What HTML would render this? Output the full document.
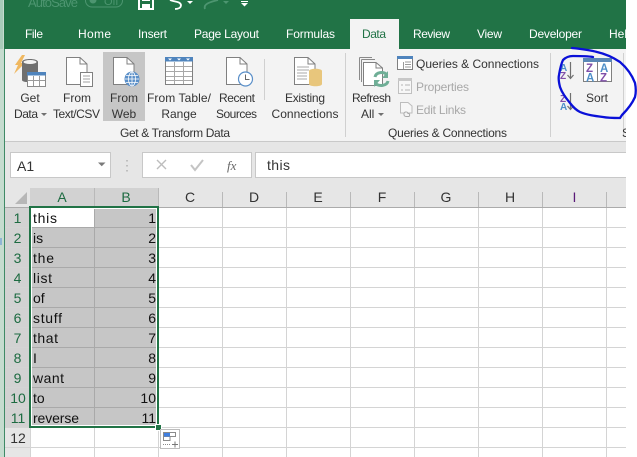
<!DOCTYPE html>
<html><head><meta charset="utf-8"><style>
html,body{margin:0;padding:0;background:#fff;width:637px;height:457px;overflow:hidden}
svg{display:block}
text{font-family:"Liberation Sans",sans-serif;font-size:12px;fill:#333}
.t{fill:#fff;font-size:12px}
.c{font-size:14px;fill:#111}
.n{font-size:14px;fill:#111;text-anchor:end}
.h{font-size:14px;fill:#333;text-anchor:middle}
.hs{font-size:14px;fill:#1d6b41;text-anchor:middle}
.m{text-anchor:middle}
.r{font-size:14px;fill:#1d6b41;text-anchor:middle}
</style></head><body>
<svg width="637" height="457" viewBox="0 0 637 457" xmlns="http://www.w3.org/2000/svg">
<rect width="637" height="457" fill="#fff"/>
<clipPath id="cp"><rect x="0" y="0" width="626" height="457"/></clipPath>
<g clip-path="url(#cp)">
<!-- title and tabs -->
<rect x="0" y="0" width="626" height="49" fill="#217346"/>
<text x="28" y="7" style="fill:#4d9570;font-size:13px" textLength="50">AutoSave</text>
<rect x="85.500" y="-6" width="37" height="13" rx="6.500" fill="none" stroke="#4d9570"/>
<circle cx="93" cy="0" r="3.500" fill="#4d9570"/>
<text x="104" y="5" style="fill:#4d9570;font-size:11px">Off</text>
<path d="M139 -3H153V9H139Z" fill="none" stroke="#fff" stroke-width="2"/><rect x="142" y="4" width="8" height="5" fill="#fff"/><rect x="142" y="-2" width="8" height="3" fill="#fff"/>
<path d="M170 0C174 2 180 1 181 5C181 8 178 9 175 9" fill="none" stroke="#fff" stroke-width="1.800"/>
<path d="M187 1h6l-3 3z" fill="#fff"/>
<path d="M205 9C203 4 210 2 218 0" fill="none" stroke="#4d9570" stroke-width="1.800"/>
<path d="M223 1h6l-3 3z" fill="#4d9570"/>
<rect x="241" y="1" width="7" height="1" fill="#fff"/><path d="M241 3h7l-3.500 3.500z" fill="#fff"/>
<rect x="350" y="19" width="49" height="31" fill="#f3f3f3"/>
<text class="t" x="25" y="38" textLength="18">File</text>
<text class="t" x="78" y="38" textLength="33">Home</text>
<text class="t" x="138" y="38" textLength="29">Insert</text>
<text class="t" x="194" y="38" textLength="65">Page Layout</text>
<text class="t" x="286" y="38" textLength="49">Formulas</text>
<text x="362" y="38" textLength="24" style="fill:#217346">Data</text>
<text class="t" x="413" y="38" textLength="37">Review</text>
<text class="t" x="477" y="38" textLength="25">View</text>
<text class="t" x="529" y="38" textLength="53">Developer</text>
<text class="t" x="609" y="38">Help</text>
<!-- ribbon -->
<rect x="0" y="49" width="626" height="92" fill="#f3f3f3"/>
<rect x="0" y="141" width="626" height="1" fill="#c9c9c9"/>
<rect x="0" y="142" width="626" height="46" fill="#e6e6e6"/>
<rect x="103" y="52" width="42" height="69" fill="#c6c6c6"/>
<rect x="264" y="59" width="1" height="41" fill="#d0d0d0"/>
<rect x="345" y="53" width="1" height="84" fill="#d0d0d0"/>
<rect x="550" y="53" width="1" height="84" fill="#d0d0d0"/>
<rect x="623" y="53" width="1" height="84" fill="#d0d0d0"/>
<!-- Get Data icon -->
<path d="M22 55H25L21 63H25L14 74L18 65H15Z" fill="#f0b860"/>
<path d="M22 62C22 58 38 58 38 62V73H27V82C24 82 22 81 22 80Z" fill="#6f6f6f"/>
<ellipse cx="30" cy="62" rx="6.500" ry="2" fill="#f3f3f3"/>
<rect x="27.500" y="72.500" width="18" height="14" fill="#fff" stroke="#8a8a8a"/>
<rect x="27" y="72" width="19" height="3.500" fill="#4f84bd"/>
<path d="M33.500 76V86M39.500 76V86M28 80.500H45" stroke="#9a9a9a" fill="none"/>
<!-- From Text/CSV -->
<path d="M66.500 57.500H80L87 64V84.500H66.500Z" fill="#fff" stroke="#808080"/>
<path d="M80 57.500V64H87" fill="none" stroke="#808080"/>
<rect x="80.500" y="72.500" width="12" height="14" fill="#fff" stroke="#808080"/>
<path d="M83 76H90M83 79H90M83 82H90" stroke="#a0a0a0" fill="none"/>
<!-- From Web -->
<path d="M113.500 57.500H127L134 64V84.500H113.500Z" fill="#fff" stroke="#808080"/>
<path d="M127 57.500V64H134" fill="none" stroke="#808080"/>
<circle cx="132" cy="79" r="7.500" fill="#5a8fc8"/>
<path d="M125 79H139M126 75.500H138M126 82.500H138M132 72V86" stroke="#fff" fill="none" stroke-width=".8"/>
<ellipse cx="132" cy="79" rx="3.500" ry="7" fill="none" stroke="#fff" stroke-width=".8"/>
<!-- From Table -->
<rect x="165.500" y="57.500" width="27" height="27" fill="#fff" stroke="#808080"/>
<rect x="165" y="57" width="28" height="4.500" fill="#4f84bd"/>
<path d="M174.500 62V84M183.500 62V84M166 66.500H192M166 71.500H192M166 76.500H192M166 80.500H192" stroke="#a8a8a8" fill="none"/>
<path d="M168 58.500h4l-2 2zM177 58.500h4l-2 2zM186 58.500h4l-2 2z" fill="#fff"/>
<!-- Recent -->
<path d="M226.500 57.500H240L247 64V84.500H226.500Z" fill="#fff" stroke="#808080"/>
<path d="M240 57.500V64H247" fill="none" stroke="#808080"/>
<circle cx="245.500" cy="79" r="7" fill="#fff" stroke="#5a8fc8" stroke-width="1.200"/>
<path d="M245.500 74.500V79.500H249.500" fill="none" stroke="#666"/>
<!-- Existing -->
<path d="M294.500 57.500H308L315 64V84.500H294.500Z" fill="#fff" stroke="#808080"/>
<path d="M308 57.500V64H315" fill="none" stroke="#808080"/>
<path d="M297 67H309M297 70H309M297 73H307M297 76H307M297 79H307" stroke="#a8a8a8" fill="none"/>
<path d="M309 71C309 68 322 68 322 71V84C322 87 309 87 309 84Z" fill="#e8c67c"/>
<!-- Refresh -->
<path d="M359.500 57.500H372M361.500 59.500H375M359.500 57.500V80M361.500 59.500V82" stroke="#8a8a8a" fill="none"/>
<path d="M363.500 62.500H376L382.500 68V85.500H363.500Z" fill="#fff" stroke="#808080"/>
<path d="M376 62.500V68H382.500" fill="none" stroke="#808080"/>
<path d="M375 77C376 72 384 71 387 75M388 81C387 86 379 87 375 83" fill="none" stroke="#6fae96" stroke-width="3"/>
<path d="M388 71V78H382Z M374 87V80H380Z" fill="#6fae96"/>
<!-- Queries -->
<rect x="397.500" y="56.500" width="15" height="13" fill="#fff" stroke="#808080"/>
<rect x="397" y="56" width="16" height="3" fill="#4f84bd"/>
<path d="M403.500 62V69M405 62H411M405 64.500H411M405 67H411" stroke="#999" fill="none"/>
<text x="416" y="68" textLength="123">Queries &amp; Connections</text>
<!-- Properties -->
<rect x="398.500" y="78.500" width="13" height="15" fill="#f7f7f7" stroke="#c0c0c0"/>
<rect x="398" y="78" width="14" height="3" fill="#c8c8c8"/>
<path d="M401 85h2M405 85h5M401 90h2M405 90h5" stroke="#b5b5b5" fill="none"/>
<text x="416" y="91" textLength="53" style="fill:#a8a8a8">Properties</text>
<!-- Edit links -->
<path d="M400.500 102.500H408L412 106V113H400.500Z" fill="#f7f7f7" stroke="#bdbdbd"/>
<path d="M404 114.500a2 2 0 0 1 4 -1h1a2 2 0 0 1 0 3h-3a2 2 0 0 1 -2 -2z" fill="#f3f3f3" stroke="#a8a8a8"/>
<text x="416" y="114" textLength="50" style="fill:#a8a8a8">Edit Links</text>
<!-- Sort -->
<text x="560" y="71" style="fill:#4f8fc8;font-size:10px;font-weight:bold">A</text>
<text x="560" y="79" style="fill:#8050a8;font-size:10px;font-weight:bold">Z</text>
<path d="M570.500 62V78M567.500 75L570.500 78.500L573.500 75" fill="none" stroke="#707070" stroke-width="1.200"/>
<text x="560" y="102" style="fill:#8050a8;font-size:10px;font-weight:bold">Z</text>
<text x="560" y="110" style="fill:#4f8fc8;font-size:10px;font-weight:bold">A</text>
<path d="M570.500 93V109M567.500 106L570.500 109.500L573.500 106" fill="none" stroke="#707070" stroke-width="1.200"/>
<rect x="583.500" y="58.500" width="28" height="23" fill="#fff" stroke="#808080"/>
<rect x="583" y="58" width="29" height="4" fill="#5a87b5"/>
<path d="M597.500 62V82" stroke="#808080"/>
<text x="586" y="72" style="fill:#8050a8;font-size:11.500px;font-weight:bold">Z</text>
<text x="586" y="81.500" style="fill:#4f8fc8;font-size:11.500px;font-weight:bold">A</text>
<text x="600" y="72" style="fill:#4f8fc8;font-size:11.500px;font-weight:bold">A</text>
<text x="600" y="81.500" style="fill:#8050a8;font-size:11.500px;font-weight:bold">Z</text>
<text class="m" x="597" y="102">Sort</text>
<!-- labels -->
<text class="m" x="30" y="102">Get</text>
<text x="14" y="118" textLength="24">Data</text><path d="M41 113h6l-3 3z" fill="#707070"/>
<text class="m" x="77" y="102">From</text>
<text class="m" x="76.500" y="118" textLength="47">Text/CSV</text>
<text class="m" x="124" y="102">From</text>
<text class="m" x="124" y="118">Web</text>
<text class="m" x="179" y="102" textLength="64">From Table/</text>
<text class="m" x="179" y="118">Range</text>
<text class="m" x="237" y="102" textLength="36">Recent</text>
<text class="m" x="236.500" y="118" textLength="41">Sources</text>
<text class="m" x="305" y="102" textLength="40">Existing</text>
<text class="m" x="305" y="118" textLength="67">Connections</text>
<text class="m" x="371.500" y="102" textLength="39">Refresh</text>
<text x="361" y="118">All</text><path d="M378 113h6l-3 3z" fill="#707070"/>
<text class="m" x="175" y="137" textLength="110">Get &amp; Transform Data</text>
<text class="m" x="447.500" y="137" textLength="119">Queries &amp; Connections</text>
<text x="622" y="137">S</text>
<!-- formula bar -->
<rect x="10.500" y="152.500" width="100" height="25" fill="#fff" stroke="#c8c8c8"/>
<text x="17" y="171" style="font-size:14px;fill:#333">A1</text>
<path d="M98 162.500h7.500l-3.750 3.750z" fill="#7a7a7a"/>
<path d="M127 160v1.500M127 165v1.500M127 170v1.500" stroke="#b0b0b0" stroke-width="1.500" fill="none"/>
<rect x="142.500" y="152.500" width="109" height="25" fill="#fff" stroke="#c8c8c8"/>
<path d="M157 160L166 169M166 160L157 169" stroke="#bdbdbd" stroke-width="1.400" fill="none"/>
<path d="M191 165L195 170L203 160" stroke="#c4c4c4" stroke-width="2" fill="none"/>
<text x="227" y="170" style="font-family:'Liberation Serif',serif;font-style:italic;font-size:13px;fill:#666">fx</text>
<rect x="255.500" y="152.500" width="375" height="25" fill="#fff" stroke="#c8c8c8"/>
<text x="267" y="170" style="font-size:14px;fill:#333" textLength="23">this</text>
<!-- headers -->
<rect x="0" y="188" width="626" height="19" fill="#e6e6e6"/>
<rect x="30" y="188" width="128" height="19" fill="#d2d2d2"/>
<rect x="5" y="207" width="25" height="250" fill="#e6e6e6"/>
<rect x="5" y="207" width="25" height="221" fill="#d2d2d2"/>
<path d="M27 192V204H15Z" fill="#b7b7b7"/>
<rect x="0" y="207" width="626" height="1" fill="#ababab"/>
<path d="M94.500 188V207M158.500 188V207M222.500 192V207M286.500 192V207M350.500 192V207M414.500 192V207M478.500 192V207M542.500 192V207M606.500 192V207" stroke="#b9b9b9" fill="none"/>
<text class="hs" x="62" y="202">A</text><text class="hs" x="126" y="202">B</text>
<text class="h" x="190" y="202">C</text><text class="h" x="254" y="202">D</text><text class="h" x="318" y="202">E</text>
<text class="h" x="382" y="202">F</text><text class="h" x="446" y="202">G</text><text class="h" x="510" y="202">H</text>
<text class="h" x="574.500" y="202" style="fill:#5a1a78">I</text>
<!-- grid -->
<path d="M30.500 208V457M94.500 208V457M158.500 208V457M222.500 208V457M286.500 208V457M350.500 208V457M414.500 208V457M478.500 208V457M542.500 208V457M606.500 208V457" stroke="#d4d4d4" fill="none"/>
<path d="M5 227.500H626M5 247.500H626M5 267.500H626M5 287.500H626M5 307.500H626M5 327.500H626M5 347.500H626M5 367.500H626M5 387.500H626M5 407.500H626M5 427.500H626M5 447.500H626" stroke="#d4d4d4" fill="none"/>
<!-- selection -->
<rect x="31" y="208" width="127" height="219" fill="#c6c6c6"/>
<path d="M94.500 208V427M32 227.500H157M32 247.500H157M32 267.500H157M32 287.500H157M32 307.500H157M32 327.500H157M32 347.500H157M32 367.500H157M32 387.500H157M32 407.500H157" stroke="#a9a9a9" fill="none"/>
<rect x="32" y="209" width="62" height="18" fill="#fff"/>
<rect x="31.500" y="208.500" width="125" height="217" fill="none" stroke="#fff"/>
<rect x="30" y="207" width="128" height="220" fill="none" stroke="#217346" stroke-width="2"/>
<rect x="155" y="424" width="7" height="7" fill="#fff"/>
<rect x="156" y="425" width="5" height="5" fill="#217346"/>
<!-- left strip -->
<rect x="0" y="0" width="4" height="457" fill="#c5dccf"/>
<rect x="0" y="0" width="3" height="49" fill="#a8cbb9"/>
<rect x="4" y="49" width="1" height="408" fill="#3f8a66"/>
<rect x="0" y="238" width="2" height="7" fill="#8fb4d4"/>
<!-- row numbers -->
<text class="r" x="17.500" y="223">1</text><text class="r" x="17.500" y="243">2</text><text class="r" x="17.500" y="263">3</text>
<text class="r" x="17.500" y="283">4</text><text class="r" x="17.500" y="303">5</text><text class="r" x="17.500" y="323">6</text>
<text class="r" x="17.500" y="343">7</text><text class="r" x="17.500" y="363">8</text><text class="r" x="17.500" y="383">9</text>
<text class="r" x="18" y="403">10</text><text class="r" x="18" y="423">11</text>
<text class="h" x="18" y="443">12</text>
<!-- cells -->
<text class="c" x="33" y="223" textLength="24">this</text>
<text class="c" x="33" y="243">is</text>
<text class="c" x="33" y="263" textLength="21">the</text>
<text class="c" x="33" y="283" textLength="19">list</text>
<text class="c" x="33" y="303">of</text>
<text class="c" x="33" y="323" textLength="29">stuff</text>
<text class="c" x="33" y="343" textLength="25">that</text>
<text class="c" x="33" y="363">I</text>
<text class="c" x="33" y="383" textLength="31">want</text>
<text class="c" x="33" y="403">to</text>
<text class="c" x="33" y="423" textLength="46">reverse</text>
<text class="n" x="156" y="223">1</text><text class="n" x="156" y="243">2</text><text class="n" x="156" y="263">3</text>
<text class="n" x="156" y="283">4</text><text class="n" x="156" y="303">5</text><text class="n" x="156" y="323">6</text>
<text class="n" x="156" y="343">7</text><text class="n" x="156" y="363">8</text><text class="n" x="156" y="383">9</text>
<text class="n" x="156" y="403">10</text><text class="n" x="156" y="423">11</text>
<!-- quick analysis -->
<rect x="160.500" y="429.500" width="19" height="19" fill="#fff" stroke="#bcbcbc"/>
<rect x="163.500" y="432.500" width="12" height="4" fill="#fff" stroke="#8a8a8a"/>
<rect x="164" y="433" width="6" height="3.500" fill="#3f7fe0"/>
<path d="M163.500 437V440.500H170V437" fill="none" stroke="#8a8a8a"/>
<path d="M163 444.500H170" stroke="#8a8a8a" stroke-dasharray="1 1"/>
<path d="M172 444.500H178M175 441.500V447.500" stroke="#777" fill="none"/>
</g>
<!-- blue circle -->
<path d="M572 48C582 49 590 50 597 52C606 54 614 58 620 62C627 68 632 75 635 83C636 88 636 93 635 97C632 104 627 110 622 115L620 118C614 118 608 118 603 117C595 116 587 115 580 112C576 110 573 107 570 103C566 98 562 93 560 87C559 83 558 79 559 75C560 69 561 64 563 60C566 57 569 56 573 56C580 56 587 56 593 57" fill="none" stroke="#0a10d8" stroke-width="2.300" stroke-linecap="round"/>
</svg>
</body></html>
